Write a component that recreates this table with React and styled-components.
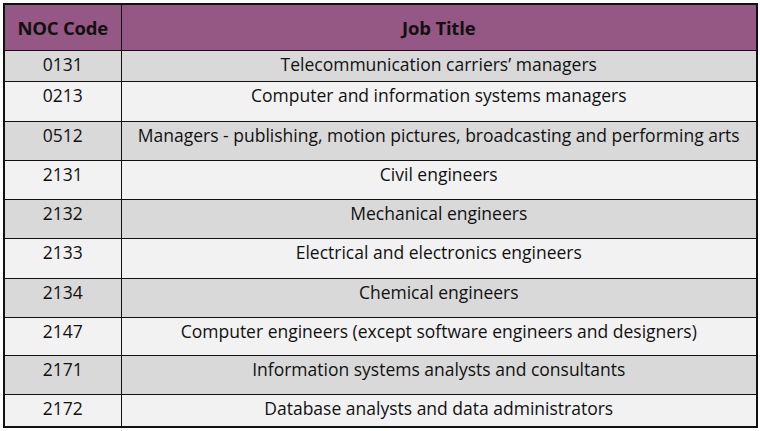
import React from "react"
import styled, { createGlobalStyle } from "styled-components"

const rows = [
  { code: "0131", title: "Telecommunication carriers’ managers", h: 31 },
  { code: "0213", title: "Computer and information systems managers", h: 40 },
  { code: "0512", title: "Managers - publishing, motion pictures, broadcasting and performing arts", h: 39 },
  { code: "2131", title: "Civil engineers", h: 39 },
  { code: "2132", title: "Mechanical engineers", h: 39 },
  { code: "2133", title: "Electrical and electronics engineers", h: 40 },
  { code: "2134", title: "Chemical engineers", h: 39 },
  { code: "2147", title: "Computer engineers (except software engineers and designers)", h: 38 },
  { code: "2171", title: "Information systems analysts and consultants", h: 39 },
  { code: "2172", title: "Database analysts and data administrators", h: 32 },
]

function App() {
  return (
    <Wrapper>
      <GlobalStyle />
      <Table>
        <colgroup>
          <col style={{ width: 117 }} />
          <col />
        </colgroup>
        <thead>
          <tr>
            <HeadCell>NOC Code</HeadCell>
            <HeadCell>Job Title</HeadCell>
          </tr>
        </thead>
        <tbody>
          {rows.map((r, i) => (
            <Row key={r.code} $shaded={i % 2 === 0} style={{ height: r.h }}>
              <Cell>{r.code}</Cell>
              <Cell>{r.title}</Cell>
            </Row>
          ))}
        </tbody>
      </Table>
    </Wrapper>
  )
}

export default App

const GlobalStyle = createGlobalStyle`
  body {
    margin: 0;
    background: #fff;
    font-family: "Open Sans", sans-serif;
  }
`

const Wrapper = styled.div`
  padding: 3px 0 0 3px;
`

const Table = styled.table`
  width: 755px;
  border-collapse: collapse;
  table-layout: fixed;
  border: 2px solid #111;
`

const HeadCell = styled.th`
  height: 45px;
  background: #955783;
  color: #111;
  font-size: 18.5px;
  font-weight: 700;
  letter-spacing: -0.2px;
  text-align: center;
  vertical-align: middle;
  border: 1.5px solid #111;
  padding: 0;
`

const Row = styled.tr`
  background: ${(p) => (p.$shaded ? "#d9d9d9" : "#f2f2f2")};
`

const Cell = styled.td`
  border: 1.5px solid #111;
  padding: 1px 0 0;
  vertical-align: top;
  text-align: center;
  font-size: 17.5px;
  line-height: 24px;
  color: #111;
  white-space: nowrap;
`
